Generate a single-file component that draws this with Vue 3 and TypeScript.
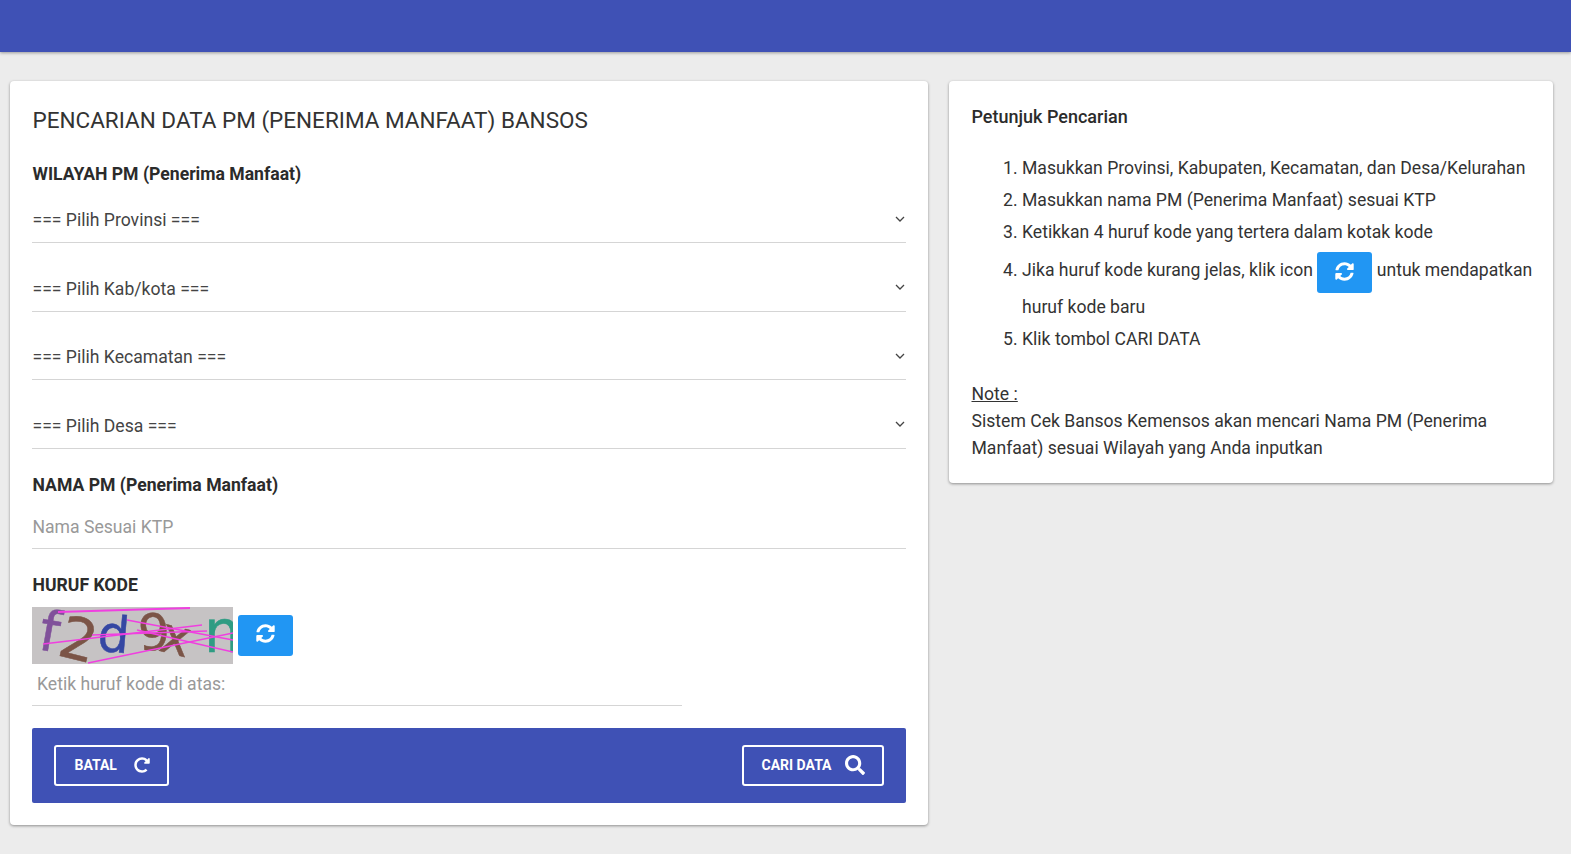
<script setup lang="ts">
const wilayah: string[] = ['=== Pilih Provinsi ===', '=== Pilih Kab/kota ===', '=== Pilih Kecamatan ===', '=== Pilih Desa ===']
</script>

<template>
  <div class="page">
    <header class="topbar"></header>
    <main class="content">
      <section class="card left">
        <h1 class="title">PENCARIAN DATA PM (PENERIMA MANFAAT) BANSOS</h1>
        <h2 class="label first">WILAYAH PM (Penerima Manfaat)</h2>
        <div v-for="w in wilayah" :key="w" class="select-wrap">
          <select class="field">
            <option>{{ w }}</option>
          </select>
          <svg class="chevron" width="10" height="6" viewBox="0 0 10 6"><path d="M1 1l4 4 4-4" fill="none" stroke="#444" stroke-width="1.3" /></svg>
        </div>
        <h2 class="label name">NAMA PM (Penerima Manfaat)</h2>
        <input class="field text" placeholder="Nama Sesuai KTP" />
        <h2 class="label kode">HURUF KODE</h2>
        <div class="captcha-row">
          <svg class="captcha" width="201" height="57" viewBox="0 0 201 57">
            <rect width="201" height="57" fill="#c6c3c4" />
            <g class="glyphs" font-family="DejaVu Sans" stroke-width="0.5">
              <text x="8" y="44" transform="rotate(10 18 25)" font-size="56" fill="#80519a" stroke="#80519a">f</text>
              <text x="28" y="52" transform="rotate(14 43 33)" font-size="58" fill="#7b5447" stroke="#7b5447">2</text>
              <text x="66" y="45" transform="rotate(5 81 27)" font-size="50" fill="#3547a3" stroke="#3547a3">d</text>
              <text x="106" y="43" transform="rotate(-3 122 25)" font-size="50" fill="#7b5447" stroke="#7b5447">9</text>
              <text x="128" y="47" transform="rotate(14 142 35)" font-size="50" fill="#7b5447" stroke="#7b5447">x</text>
              <text x="172" y="45" font-size="58" fill="#2f9c83" stroke="#2f9c83">n</text>
            </g>
            <g stroke="#f03fe0" stroke-width="1.4" fill="none">
              <path d="M26 5 L158 1" stroke-width="2" />
              <path d="M11 37 L170 18" />
              <path d="M95 13 L201 33" />
              <path d="M56 56 L201 26" />
              <path d="M105 23 L201 45" />
              <path d="M60 28 L175 24" />
            </g>
          </svg>
          <button type="button" class="refresh" aria-label="Muat ulang kode">
            <svg viewBox="0 0 512 512" width="19" height="19"><path fill="#fff" d="M370.720 133.280C339.458 104.008 298.888 87.962 255.848 88c-77.458.068-144.328 53.178-162.791 126.850-1.344 5.363-6.122 9.150-11.651 9.150H24.103c-7.498 0-13.194-6.807-11.807-14.176C33.933 94.924 134.813 8 256 8c66.448 0 126.791 26.136 171.315 68.685L463.030 40.970C478.149 25.851 504 36.559 504 57.941V192c0 13.255-10.745 24-24 24H345.941c-21.382 0-32.090-25.851-16.971-40.971l41.750-41.749zM32 296h134.059c21.382 0 32.090 25.851 16.971 40.971l-41.750 41.750c31.262 29.273 71.835 45.319 114.876 45.280 77.418-.070 144.315-53.144 162.787-126.849 1.344-5.363 6.122-9.150 11.651-9.150h57.304c7.498 0 13.194 6.807 11.807 14.176C478.067 417.076 377.187 504 256 504c-66.448 0-126.791-26.136-171.315-68.685L48.970 471.030C33.851 486.149 8 475.441 8 454.059V320c0-13.255 10.745-24 24-24z"/></svg>
          </button>
        </div>
        <input class="code-input" placeholder="Ketik huruf kode di atas:" />
        <div class="actions">
          <button type="button" class="outline batal">
            <span>BATAL</span>
            <svg viewBox="0 0 512 512" width="16" height="16"><path fill="#fff" d="M256.455 8c66.269.119 126.437 26.233 170.859 68.685l35.715-35.715C478.149 25.851 504 36.559 504 57.941V192c0 13.255-10.745 24-24 24H345.941c-21.382 0-32.090-25.851-16.971-40.971l41.750-41.750c-30.864-28.899-70.801-44.907-113.230-45.273-92.398-.798-170.283 73.977-169.484 169.442C88.764 348.009 162.184 424 256 424c41.127 0 79.997-14.678 110.629-41.556 4.743-4.161 11.906-3.908 16.368.553l39.662 39.662c4.872 4.872 4.631 12.815-.482 17.433C378.202 479.813 319.926 504 256 504 119.034 504 8.001 392.967 8 256.002 7.999 119.193 119.646 7.755 256.455 8z" /></svg>
          </button>
          <button type="button" class="outline cari">
            <span>CARI DATA</span>
            <svg viewBox="0 0 512 512" width="20" height="20"><path fill="#fff" d="M505 442.700L405.300 343c-4.500-4.500-10.600-7-17-7H372c27.600-35.300 44-79.700 44-128C416 93.100 322.900 0 208 0S0 93.100 0 208s93.100 208 208 208c48.300 0 92.700-16.400 128-44v16.300c0 6.400 2.500 12.500 7 17l99.700 99.700c9.400 9.400 24.600 9.400 33.900 0l28.300-28.300c9.400-9.400 9.400-24.600.1-34zM208 336c-70.700 0-128-57.200-128-128 0-70.700 57.200-128 128-128 70.700 0 128 57.200 128 128 0 70.700-57.200 128-128 128z"/></svg>
          </button>
        </div>
      </section>

      <aside class="card right">
        <h3 class="help-title">Petunjuk Pencarian</h3>
        <ol class="steps">
          <li>Masukkan Provinsi, Kabupaten, Kecamatan, dan Desa/Kelurahan</li>
          <li>Masukkan nama PM (Penerima Manfaat) sesuai KTP</li>
          <li>Ketikkan 4 huruf kode yang tertera dalam kotak kode</li>
          <li class="with-button">Jika huruf kode kurang jelas, klik icon
            <button type="button" class="refresh inline" aria-label="Muat ulang kode">
              <svg viewBox="0 0 512 512" width="19" height="19"><path fill="#fff" d="M370.720 133.280C339.458 104.008 298.888 87.962 255.848 88c-77.458.068-144.328 53.178-162.791 126.850-1.344 5.363-6.122 9.150-11.651 9.150H24.103c-7.498 0-13.194-6.807-11.807-14.176C33.933 94.924 134.813 8 256 8c66.448 0 126.791 26.136 171.315 68.685L463.030 40.970C478.149 25.851 504 36.559 504 57.941V192c0 13.255-10.745 24-24 24H345.941c-21.382 0-32.090-25.851-16.971-40.971l41.750-41.749zM32 296h134.059c21.382 0 32.090 25.851 16.971 40.971l-41.750 41.750c31.262 29.273 71.835 45.319 114.876 45.280 77.418-.070 144.315-53.144 162.787-126.849 1.344-5.363 6.122-9.150 11.651-9.150h57.304c7.498 0 13.194 6.807 11.807 14.176C478.067 417.076 377.187 504 256 504c-66.448 0-126.791-26.136-171.315-68.685L48.970 471.030C33.851 486.149 8 475.441 8 454.059V320c0-13.255 10.745-24 24-24z"/></svg>
            </button>
            untuk mendapatkan huruf kode baru</li>
          <li>Klik tombol CARI DATA</li>
        </ol>
        <p class="note"><u>Note :</u><br />Sistem Cek Bansos Kemensos akan mencari Nama PM (Penerima Manfaat) sesuai Wilayah yang Anda inputkan</p>
      </aside>
    </main>
  </div>
</template>

<style>
html, body { margin: 0; background: #ececec; }
</style>

<style scoped>
.page { font-family: Roboto, sans-serif; color: #333; font-size: 17.600px; height: 854px; overflow: hidden; background: #ececec; }
.topbar { height: 52px; background: #3f51b5; box-shadow: 0 1px 3px rgba(0,0,0,.35); }
.content { display: flex; align-items: flex-start; gap: 21px; padding: 29px 18px 0 10px; }
.card { background: #fff; border-radius: 4px; box-shadow: 0 1px 3px rgba(0,0,0,.4); box-sizing: border-box; }
.left { width: 918px; height: 744px; padding: 23px 22px; }
.right { width: 604px; height: 402px; padding: 22.500px 20px 22.500px 22.500px; }
.title { margin: 0 0 0 .5px; font-size: 22.500px; font-weight: 400; line-height: 32px; color: #333; }
.label { margin: 0 0 0 .5px; font-size: 17.600px; font-weight: 700; line-height: 26px; color: #2b2b2b; }
.first { margin: 25px 0 10.200px .5px; }
.select-wrap { position: relative; margin-bottom: 22.500px; }
.chevron { position: absolute; right: 1px; top: 18.500px; pointer-events: none; }
.field { display: block; width: 100%; height: 46px; box-sizing: border-box; margin: 0; padding: 1px 0 0 .5px; border: 0; border-bottom: 1px solid #d5d5d5; border-radius: 0; background-color: #fff; font: 17.600px Roboto, sans-serif; color: #444; outline: none; appearance: none; -webkit-appearance: none; }
.text { height: 45px; margin-top: 6px; padding-top: 2px; }
.text::placeholder, .code-input::placeholder { color: #999; opacity: 1; }
.name { margin-top: 23px; }
.kode { margin-top: 23px; }
.captcha-row { display: flex; align-items: center; gap: 5px; margin-top: 9px; }
.captcha { display: block; }
.glyphs { filter: blur(.4px); }
.refresh { display: inline-flex; align-items: center; justify-content: center; width: 55px; height: 41px; padding: 0; border: 0; border-radius: 3px; background: #2196f3; }
.refresh svg { margin-bottom: 3px; }
.inline { vertical-align: middle; margin: 2px 0 0; }
.code-input { display: block; width: 650px; height: 42px; box-sizing: border-box; padding: 0 5px; border: 0; border-bottom: 1px solid #d5d5d5; font: 17.600px Roboto, sans-serif; outline: none; }
.actions { display: flex; justify-content: space-between; align-items: center; height: 75px; margin-top: 22px; padding: 0 22px; background: #3f51b5; border-radius: 2px; }
.outline { display: flex; align-items: center; box-sizing: border-box; height: 41px; border: 2px solid #fff; border-radius: 3px; background: transparent; color: #fff; font: 700 14px Roboto, sans-serif; padding: 0; }
.batal { width: 115px; gap: 17px; padding-left: 18.500px; }
.cari { width: 142px; gap: 14px; padding-left: 17.500px; }
.help-title { margin: 0; font-size: 18px; font-weight: 500; line-height: 26px; color: #2b2b2b; }
.steps { margin: 22.700px 0 0; padding: 0 0 0 50.500px; }
.steps li { line-height: 32px; padding: 0; }
.steps li.with-button { line-height: 28px; margin: 2px 0; }
.note { margin: 26px 0 0; line-height: 27px; }
</style>
